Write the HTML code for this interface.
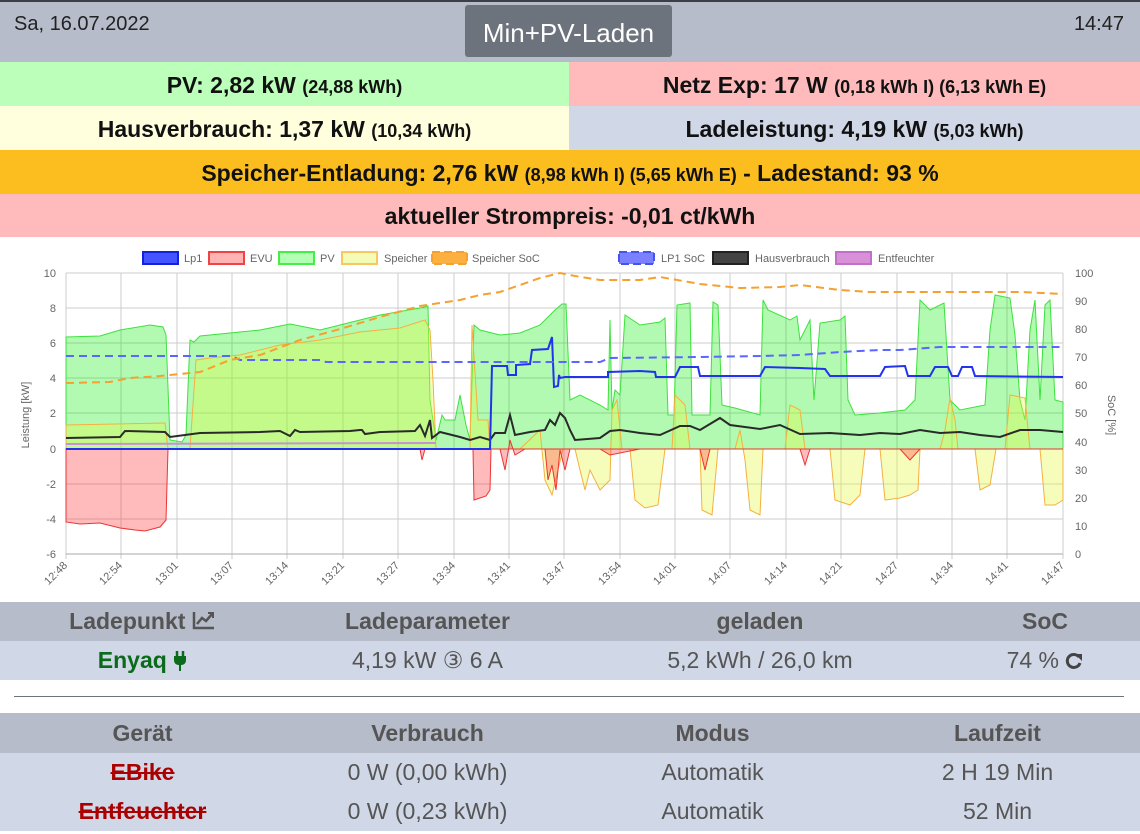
<!DOCTYPE html>
<html><head><meta charset="utf-8"><style>
*{margin:0;padding:0;box-sizing:border-box}
body{width:1140px;height:834px;overflow:hidden;font-family:"Liberation Sans",sans-serif;background:#fff;position:relative}
.top{position:absolute;left:0;top:0;width:1140px;height:2px;background:#3c4046}
.hdr{position:absolute;left:0;top:2px;width:1140px;height:60px;background:#b6bcc9}
.date{position:absolute;left:14px;top:11px;font-size:20px;color:#222}
.time{position:absolute;right:16px;top:11px;font-size:20px;color:#222}
.btn{position:absolute;left:465px;top:3px;width:207px;height:52px;background:#6c737c;border-radius:3px;color:#fff;font-size:26px;text-align:center;line-height:56px}
.row{position:absolute;height:44px;line-height:46px;text-align:center;font-weight:bold;font-size:23px;color:#111}
.row small{font-size:18px}
table{position:absolute;left:0;width:1140px;border-collapse:collapse;font-size:23px;text-align:center}
th{background:#b6bcc9;color:#555;height:39px;font-weight:bold}
td{background:#d0d7e6;color:#555;height:39px}
.hr{position:absolute;left:14px;top:696px;width:1110px;height:1px;background:#6c737c}
.lab{font-family:"Liberation Sans",sans-serif;font-size:11px;fill:#666}
</style></head><body>
<div class="top"></div>
<div class="hdr"><div class="date">Sa, 16.07.2022</div><div class="btn">Min+PV-Laden</div><div class="time">14:47</div></div>
<div class="row" style="left:0;top:62px;width:569px;background:#bbffbb">PV: 2,82 kW <small>(24,88 kWh)</small></div>
<div class="row" style="left:569px;top:62px;width:571px;background:#ffbbbb">Netz Exp: 17 W <small>(0,18 kWh I) (6,13 kWh E)</small></div>
<div class="row" style="left:0;top:106px;width:569px;background:#fffedd">Hausverbrauch: 1,37 kW <small>(10,34 kWh)</small></div>
<div class="row" style="left:569px;top:106px;width:571px;background:#d0d7e6">Ladeleistung: 4,19 kW <small>(5,03 kWh)</small></div>
<div class="row" style="left:0;top:150px;width:1140px;background:#fcbe1f">Speicher-Entladung: 2,76 kW <small>(8,98 kWh I) (5,65 kWh E)</small> - Ladestand: 93 %</div>
<div class="row" style="left:0;top:194px;width:1140px;height:43px;line-height:45px;background:#ffbbbb">aktueller Strompreis: -0,01 ct/kWh</div>

<svg style="position:absolute;left:0;top:237px" width="1140" height="364" viewBox="0 237 1140 364">
<g stroke="#ccc" stroke-width="1" fill="none">
<path d="M66 273H1063M66 308H1063M66 343H1063M66 378H1063M66 413H1063M66 484H1063M66 519H1063"/>
<path d="M66 273V559M121 273V559M177 273V559M232 273V559M287 273V559M343 273V559M398 273V559M454 273V559M509 273V559M564 273V559M620 273V559M675 273V559M730 273V559M786 273V559M841 273V559M897 273V559M952 273V559M1007 273V559M1063 273V559"/>
</g>
<path d="M66 449H1063M66 554H1063" stroke="#aaa"/>
<path fill="rgba(0,240,0,0.3)" stroke="#3de13d" stroke-width="1" d="M66 449L66 337 100 336 120 330 150 325 163 327 166 335 170 440 182 442 186 435 190 340 194 342 196 340 200 336 260 330 290 324 320 330 360 320 380 315 420 308 428 306 430 400 436 440 442 415 445 420 455 420 460 395 466 425 470 440 474 325 480 330 500 335 520 333 540 325 555 310 562 304 566 304 570 400 580 395 600 405 608 410 610 320 612 410 615 390 620 395 625 315 640 325 660 322 665 318 668 415 674 415 677 305 690 303 692 415 710 415 713 302 718 305 722 405 735 408 760 415 763 300 768 310 790 320 797 316 800 340 805 330 810 320 814 400 820 323 840 320 845 316 848 400 855 415 880 413 905 410 915 400 920 300 930 310 944 303 950 400 960 410 985 405 990 330 995 295 1010 298 1015 335 1020 400 1025 420 1030 330 1035 300 1040 400 1045 305 1050 300 1055 400 1063 402 1063 449Z"/>
<path fill="rgba(230,250,60,0.35)" stroke="#f5b040" stroke-width="1" d="M66 449L66 425 165 423 168 449 190 449 196 360 210 358 240 355 280 345 320 340 360 332 400 328 425 320 430 330 433 380 436 449 470 449 472 325 478 420 488 420 490 449 520 449 540 430 545 480 552 495 558 470 563 449 575 449 580 470 585 490 590 470 600 490 610 480 612 410 617 400 622 449 630 449 635 500 645 508 658 505 665 449 672 449 675 395 685 405 690 449 700 449 702 510 712 515 718 449 735 449 740 430 745 460 750 510 760 515 763 449 785 449 790 405 800 410 805 449 830 449 835 500 850 505 860 495 865 449 880 449 885 500 900 498 910 495 918 490 920 449 940 449 945 430 950 398 955 420 958 449 975 449 980 490 990 485 996 449 1005 449 1010 395 1025 398 1030 449 1040 449 1045 505 1055 505 1063 500 1063 449Z"/>
<path fill="rgba(255,60,60,0.35)" stroke="#ee3333" stroke-width="1" d="M66 449L66 522 80 524 100 523 120 528 135 530 145 531 160 527 166 520 168 449 420 449 422 460 425 449 473 449 474 500 486 496 490 490 491 449 500 449 505 470 510 440 515 455 525 449 545 449 548 480 552 465 556 490 560 450 565 470 570 449 600 449 610 455 640 449 700 449 705 470 710 449 800 449 805 465 810 449 900 449 910 460 920 449 1063 449Z"/>
<path d="M66 444L436 443" stroke="#c890d8" stroke-width="2" fill="none"/>
<path fill="none" stroke="#2a2a2a" stroke-width="2" d="M66 438L120 437 125 431 165 432 170 437 200 433 260 432 280 431 290 436 295 430 300 432 350 431 360 430 362 430 365 434 380 432 415 431 420 425 425 436 430 420 432 438 440 432 460 437 470 440 480 437 490 440 495 433 505 433 510 415 515 435 530 432 545 430 550 420 555 425 560 413 565 418 570 430 575 440 600 438 610 431 620 430 640 433 660 435 680 426 690 426 700 430 720 418 730 425 760 429 780 425 800 434 830 433 860 435 880 433 900 434 920 430 940 433 960 432 980 435 1000 437 1020 430 1040 430 1063 432"/>
<path fill="none" stroke="#2233ee" stroke-width="2" d="M66 449L490 449 492 366 507 366 508 375 516 375 516 365 530 364 532 350 548 349 552 337 554 387 558 386 559 375 560 378 565 377 600 377 608 377 608 372 640 371 655 372 656 377 675 377 680 367 698 367 700 376 760 376 765 367 800 368 825 369 830 376 880 376 885 367 905 366 908 376 930 376 935 367 948 367 952 376 958 376 962 367 972 367 975 376 1063 377"/>
<path fill="none" stroke="#5a66ff" stroke-width="2" stroke-dasharray="8,5" d="M66 356L232 356 240 360 322 360 326 362 480 362 600 362 610 358 700 357 760 356 800 355 840 352 880 350 900 350 940 347 1063 347"/>
<path fill="none" stroke="#f5a030" stroke-width="2" stroke-dasharray="8,5" d="M66 383L110 382 130 378 160 376 200 372 230 360 260 355 300 340 340 329 380 317 420 306 460 300 480 295 500 292 520 285 540 278 560 273 575 276 600 280 640 280 660 277 700 284 740 288 780 287 800 285 840 290 870 292 900 292 940 292 980 292 1020 292 1063 294"/>
<g class="lab" text-anchor="end">
<text x="56" y="277">10</text><text x="56" y="312">8</text><text x="56" y="347">6</text><text x="56" y="382">4</text><text x="56" y="417">2</text><text x="56" y="453">0</text><text x="56" y="488">-2</text><text x="56" y="523">-4</text><text x="56" y="558">-6</text>
</g>
<g class="lab">
<text x="1075" y="277">100</text><text x="1075" y="305">90</text><text x="1075" y="333">80</text><text x="1075" y="361">70</text><text x="1075" y="389">60</text><text x="1075" y="417">50</text><text x="1075" y="446">40</text><text x="1075" y="474">30</text><text x="1075" y="502">20</text><text x="1075" y="530">10</text><text x="1075" y="558">0</text>
</g>
<text class="lab" transform="translate(29,415) rotate(-90)" text-anchor="middle">Leistung [kW]</text>
<text class="lab" transform="translate(1108,415) rotate(90)" text-anchor="middle">SoC [%]</text>
<g class="lab" text-anchor="end">
<text transform="translate(68,566) rotate(-45)">12:48</text><text transform="translate(123,566) rotate(-45)">12:54</text><text transform="translate(179,566) rotate(-45)">13:01</text><text transform="translate(234,566) rotate(-45)">13:07</text><text transform="translate(289,566) rotate(-45)">13:14</text><text transform="translate(345,566) rotate(-45)">13:21</text><text transform="translate(400,566) rotate(-45)">13:27</text><text transform="translate(456,566) rotate(-45)">13:34</text><text transform="translate(511,566) rotate(-45)">13:41</text><text transform="translate(566,566) rotate(-45)">13:47</text><text transform="translate(622,566) rotate(-45)">13:54</text><text transform="translate(677,566) rotate(-45)">14:01</text><text transform="translate(732,566) rotate(-45)">14:07</text><text transform="translate(788,566) rotate(-45)">14:14</text><text transform="translate(843,566) rotate(-45)">14:21</text><text transform="translate(899,566) rotate(-45)">14:27</text><text transform="translate(954,566) rotate(-45)">14:34</text><text transform="translate(1009,566) rotate(-45)">14:41</text><text transform="translate(1065,566) rotate(-45)">14:47</text>
</g>
<g stroke-width="2">
<rect x="143" y="252" width="35" height="12" fill="#4455ff" stroke="#1122dd"/>
<rect x="209" y="252" width="35" height="12" fill="#ffb3b3" stroke="#ee4444"/>
<rect x="279" y="252" width="35" height="12" fill="#b3ffb3" stroke="#44ee44"/>
<rect x="342" y="252" width="35" height="12" fill="#f3fbb6" stroke="#f8c860"/>
<rect x="432" y="252" width="35" height="12" fill="#fcb040" stroke="#f5a030" stroke-dasharray="8,4"/>
<rect x="619" y="252" width="35" height="12" fill="#7a80ff" stroke="#4455ee" stroke-dasharray="8,4"/>
<rect x="713" y="252" width="35" height="12" fill="#444" stroke="#222"/>
<rect x="836" y="252" width="35" height="12" fill="#d890d8" stroke="#c070c8"/>
</g>
<g class="lab" font-size="11">
<text x="184" y="262">Lp1</text><text x="250" y="262">EVU</text><text x="320" y="262">PV</text><text x="384" y="262">Speicher</text><text x="472" y="262">Speicher SoC</text><text x="661" y="262">LP1 SoC</text><text x="755" y="262">Hausverbrauch</text><text x="878" y="262">Entfeuchter</text>
</g>
</svg>

<table style="top:602px">
<tr><th style="width:285px">Ladepunkt <svg width="24" height="20" viewBox="0 0 24 20" style="vertical-align:-1px"><path d="M2 2V18H22" fill="none" stroke="#555" stroke-width="2.5"/><path d="M5 14L10 8 14 11 20 4" fill="none" stroke="#555" stroke-width="2.5"/><path d="M16 3H21V8" fill="none" stroke="#555" stroke-width="2"/></svg></th><th style="width:285px">Ladeparameter</th><th style="width:380px">geladen</th><th>SoC</th></tr>
<tr><td style="color:#0b6b1b;font-weight:bold">Enyaq <svg width="14" height="20" viewBox="0 0 14 20" style="vertical-align:-3px"><path d="M4 0V5M10 0V5" stroke="#0b6b1b" stroke-width="2.5"/><path d="M1 5H13V9C13 13 10 14 8 14V20H6V14C4 14 1 13 1 9Z" fill="#0b6b1b"/></svg></td><td>4,19 kW ③ 6 A</td><td>5,2 kWh / 26,0 km</td><td>74 % <svg width="18" height="18" viewBox="0 0 18 18" style="vertical-align:-2px"><path d="M14 5A6.5 6.5 0 1 0 15 11" fill="none" stroke="#444" stroke-width="3"/><path d="M10 2H17V9Z" fill="#444"/></svg></td></tr>
</table>
<div class="hr"></div>
<table style="top:713px">
<tr><th style="width:285px;height:40px">Gerät</th><th style="width:285px">Verbrauch</th><th style="width:285px">Modus</th><th>Laufzeit</th></tr>
<tr><td style="color:#a00;font-weight:bold;text-decoration:line-through">EBike</td><td>0 W (0,00 kWh)</td><td>Automatik</td><td>2 H 19 Min</td></tr>
<tr><td style="color:#a00;font-weight:bold;text-decoration:line-through">Entfeuchter</td><td>0 W (0,23 kWh)</td><td>Automatik</td><td>52 Min</td></tr>
</table>
</body></html>
